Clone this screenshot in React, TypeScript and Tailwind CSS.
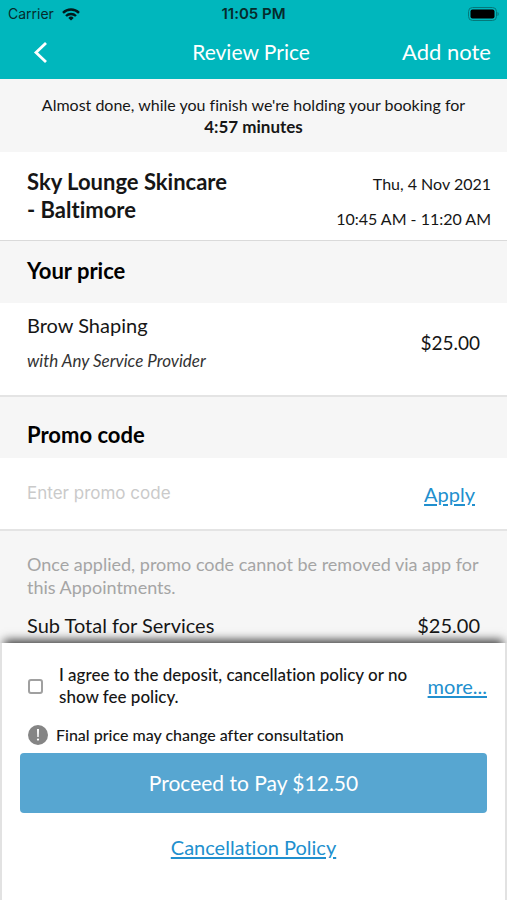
import type { ReactNode } from 'react'

function StatusBar() {
  return (
    <div className="flex items-center justify-between h-7 px-2 font-['Inter',sans-serif] text-[15px] text-[#062b2c]">
      <div className="flex flex-1 items-center gap-2">
        <span className="text-sm">Carrier</span>
        <svg viewBox="0 0 18 13" className="w-[18px] h-[13px]" fill="none" stroke="#021a1b" strokeWidth="2.4" aria-hidden="true">
          <path d="M1 4.8a11.4 11.4 0 0 1 16 0" />
          <path d="M4 8a7.2 7.2 0 0 1 10 0" />
          <path d="M9 12.6 6.3 9.9a3.9 3.9 0 0 1 5.4 0z" fill="#021a1b" stroke="none" />
        </svg>
      </div>
      <span className="font-semibold whitespace-nowrap">11:05 PM</span>
      <div className="flex flex-1 justify-end">
        <svg viewBox="0 0 32 14" className="w-8 h-[14px]" aria-hidden="true">
          <rect x="1.500" y="0.500" width="28" height="13" rx="4" fill="none" stroke="#04787a" />
          <rect x="3.500" y="2.500" width="24" height="9" rx="2" fill="#000" />
          <path d="M30.500 5c1.600.6 1.600 3.400 0 4z" fill="#04787a" />
        </svg>
      </div>
    </div>
  )
}

function SectionTitle({ children }: { children: ReactNode }) {
  return <h2 className="text-[22px] leading-7 font-bold text-black">{children}</h2>
}

export default function App() {
  return (
    <div className="min-h-screen flex flex-col bg-[#f6f6f6] font-['Lato',sans-serif] [font-variant-ligatures:none] text-[#161616]">
      <header className="bg-[#00b7bd]">
        <StatusBar />
        <div className="flex justify-between items-center h-[51px] pb-1 px-4 text-[21px] text-white">
          <button type="button" aria-label="Back" className="w-[84px] pl-4">
            <svg viewBox="0 0 16 22" className="w-4 h-[22px]" fill="none" stroke="currentColor" strokeWidth="2.8" aria-hidden="true">
              <path d="M14 2 4 11.500 14 21" />
            </svg>
          </button>
          <h1 className="whitespace-nowrap">Review Price</h1>
          <button type="button" className="text-[22px] whitespace-nowrap">Add note</button>
        </div>
      </header>

      <main className="flex-1">
        <p className="h-[73px] flex flex-col justify-center text-center text-base leading-[22px]">
          <span>Almost done, while you finish we're holding your booking for</span>
          <strong className="text-[17px] leading-[22px] font-bold">4:57 minutes</strong>
        </p>

        <section className="flex justify-between h-[89px] pl-[27px] pr-4 bg-white border-b border-[#dadada]">
          <h2 className="pt-4 text-[22px] leading-7 font-bold">
            Sky Lounge Skincare
            <br />- Baltimore
          </h2>
          <div className="pt-[14px] text-right text-base leading-[35px]">
            <p>Thu, 4 Nov 2021</p>
            <p>10:45 AM - 11:20 AM</p>
          </div>
        </section>

        <div className="h-[62px] px-[27px] pt-4">
          <SectionTitle>Your price</SectionTitle>
        </div>
        <section className="flex justify-between items-center h-[94px] px-[27px] pb-3 bg-white border-b-2 border-[#e4e4e4]">
          <div>
            <p className="text-xl leading-9">Brow Shaping</p>
            <p className="text-[17px] leading-9 italic text-[#333]">with Any Service Provider</p>
          </div>
          <span className="text-[19px]">$25.00</span>
        </section>

        <div className="h-[61px] px-[27px] pt-6">
          <SectionTitle>Promo code</SectionTitle>
        </div>
        <form className="flex justify-between items-center h-[73px] pl-[27px] pr-8 bg-white border-b-2 border-[#e4e4e4]">
          <input
            type="text"
            aria-label="Promo code"
            placeholder="Enter promo code"
            className="flex-1 min-w-0 font-['Inter',sans-serif] text-[17px] outline-none placeholder:text-[#cacaca]"
          />
          <a href="#apply" className="text-xl text-[#218fce] underline underline-offset-2">Apply</a>
        </form>

        <section className="px-[27px] pt-[22px]">
          <p className="text-lg leading-[23px] text-[#a5a5a5]">
            Once applied, promo code cannot be removed via app for this Appointments.
          </p>
          <div className="flex justify-between pt-3 text-xl leading-7">
            <span>Sub Total for Services</span>
            <span>$25.00</span>
          </div>
        </section>
      </main>

      <footer className="relative px-[2px] bg-[#e2e2e2] shadow-[0_-7px_9px_-4px_rgba(0,0,0,0.75)]">
        <div className="h-[257px] px-[18px] pt-[21px] bg-white">
          <div className="flex items-center justify-between">
            <label className="flex items-center gap-4 pl-2 text-[17px] leading-[22px] font-medium">
              <input
                type="checkbox"
                className="appearance-none shrink-0 size-[15px] border-2 border-[#a0a0a0] rounded-[3px] bg-white checked:bg-[#57a6d1]"
              />
              <span className="max-w-[352px]">I agree to the deposit, cancellation policy or no show fee policy.</span>
            </label>
            <a href="#more" className="text-xl text-[#218fce] underline underline-offset-2">more...</a>
          </div>
          <p className="flex items-center gap-2 pl-2 pt-4 text-base leading-[22px] font-medium">
            <svg viewBox="0 0 20 20" className="size-5" aria-hidden="true">
              <circle cx="10" cy="10" r="10" fill="#858585" />
              <path d="M9 4h2l-.3 8H9.300z" fill="#fff" />
              <circle cx="10" cy="14.600" r="1.100" fill="#fff" />
            </svg>
            Final price may change after consultation
          </p>
          <button type="button" className="block w-full h-[60px] mt-[7px] rounded bg-[#57a6d1] text-[21px] text-white">
            Proceed to Pay $12.50
          </button>
          <div className="pt-5 text-center">
            <a href="#cancellation" className="text-xl text-[#218fce] underline underline-offset-2">Cancellation Policy</a>
          </div>
        </div>
      </footer>
    </div>
  )
}
